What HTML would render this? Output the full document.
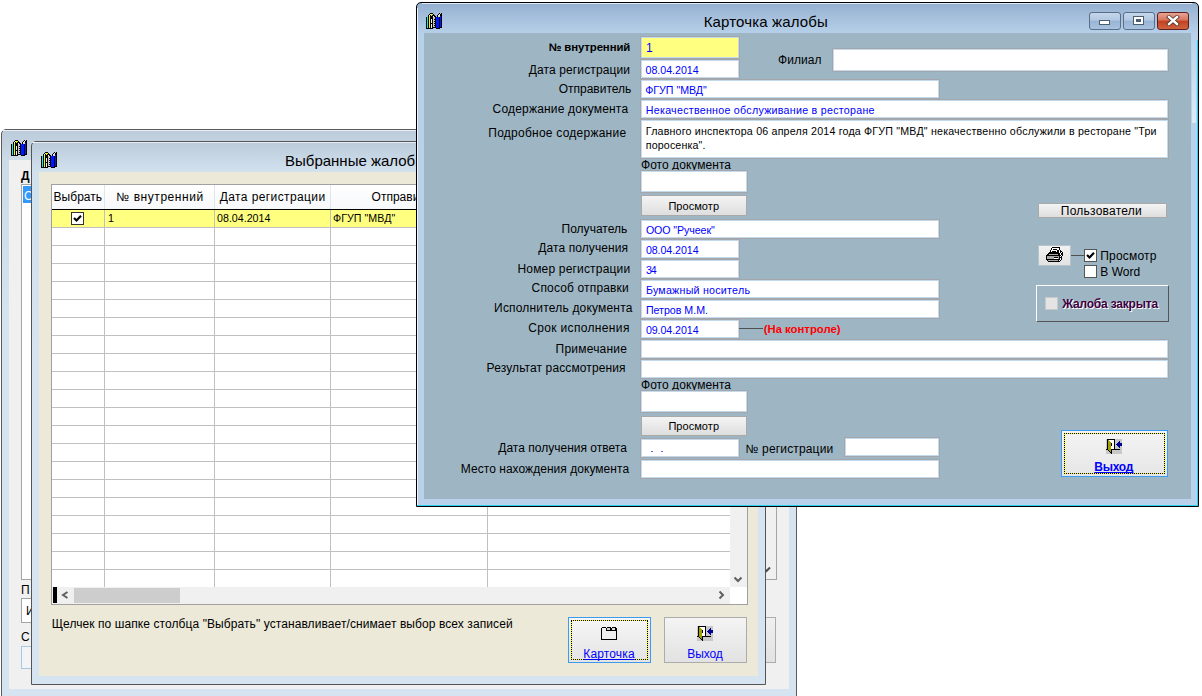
<!DOCTYPE html><html><head><meta charset="utf-8"><style>
html,body{margin:0;padding:0;}
body{width:1202px;height:696px;position:relative;overflow:hidden;background:#fff;font-family:"Liberation Sans",sans-serif;}
body div{position:absolute;box-sizing:border-box;}
.t{white-space:pre;}
</style></head><body>
<div style="left:1px;top:129px;width:796px;height:581px;border:1px solid #5a5a5a;border-radius:5px 5px 0 0;background:linear-gradient(#bccbda 0px,#cddbe8 30px,#d6e3f0 200px);"></div>
<div style="left:2px;top:130px;width:794px;height:1px;background:#e8eef4;"></div>
<svg style="position:absolute;left:11px;top:140px" width="16" height="16" shape-rendering="crispEdges"><rect x="4" y="0" width="3" height="1" fill="#000"/><rect x="13" y="0" width="1" height="1" fill="#000"/><rect x="15" y="0" width="1" height="1" fill="#000"/><rect x="3" y="1" width="1" height="1" fill="#000"/><rect x="4" y="1" width="1" height="1" fill="#f0f0f0"/><rect x="5" y="1" width="2" height="1" fill="#f8f000"/><rect x="7" y="1" width="1" height="1" fill="#000"/><rect x="12" y="1" width="1" height="1" fill="#000"/><rect x="13" y="1" width="1" height="1" fill="#f0f0f0"/><rect x="14" y="1" width="2" height="1" fill="#000"/><rect x="2" y="2" width="1" height="1" fill="#000"/><rect x="3" y="2" width="1" height="1" fill="#f0f0f0"/><rect x="4" y="2" width="1" height="1" fill="#000"/><rect x="5" y="2" width="1" height="1" fill="#f8f000"/><rect x="6" y="2" width="3" height="1" fill="#000"/><rect x="11" y="2" width="1" height="1" fill="#000"/><rect x="12" y="2" width="1" height="1" fill="#f0f0f0"/><rect x="13" y="2" width="1" height="1" fill="#e8dcc8"/><rect x="14" y="2" width="2" height="1" fill="#000"/><rect x="2" y="3" width="1" height="1" fill="#000"/><rect x="3" y="3" width="1" height="1" fill="#f8f000"/><rect x="4" y="3" width="3" height="1" fill="#000"/><rect x="7" y="3" width="1" height="1" fill="#f0f0f0"/><rect x="8" y="3" width="2" height="1" fill="#000"/><rect x="11" y="3" width="1" height="1" fill="#000"/><rect x="12" y="3" width="2" height="1" fill="#e8dcc8"/><rect x="14" y="3" width="1" height="1" fill="#0018ff"/><rect x="15" y="3" width="1" height="1" fill="#000"/><rect x="0" y="4" width="1" height="1" fill="#000"/><rect x="1" y="4" width="1" height="1" fill="#00f0f0"/><rect x="2" y="4" width="1" height="1" fill="#000"/><rect x="3" y="4" width="1" height="1" fill="#f8f000"/><rect x="4" y="4" width="3" height="1" fill="#000"/><rect x="7" y="4" width="2" height="1" fill="#c8c8c8"/><rect x="9" y="4" width="1" height="1" fill="#000"/><rect x="10" y="4" width="3" height="1" fill="#0018ff"/><rect x="13" y="4" width="1" height="1" fill="#000"/><rect x="14" y="4" width="1" height="1" fill="#0018ff"/><rect x="15" y="4" width="1" height="1" fill="#000"/><rect x="0" y="5" width="1" height="1" fill="#000"/><rect x="1" y="5" width="1" height="1" fill="#00f0f0"/><rect x="2" y="5" width="1" height="1" fill="#000"/><rect x="3" y="5" width="1" height="1" fill="#f8f000"/><rect x="4" y="5" width="3" height="1" fill="#000"/><rect x="7" y="5" width="2" height="1" fill="#c8c8c8"/><rect x="9" y="5" width="1" height="1" fill="#000"/><rect x="10" y="5" width="3" height="1" fill="#0018ff"/><rect x="13" y="5" width="1" height="1" fill="#000"/><rect x="14" y="5" width="1" height="1" fill="#0018ff"/><rect x="15" y="5" width="1" height="1" fill="#000"/><rect x="0" y="6" width="1" height="1" fill="#000"/><rect x="1" y="6" width="1" height="1" fill="#00f0f0"/><rect x="2" y="6" width="1" height="1" fill="#000"/><rect x="3" y="6" width="1" height="1" fill="#f8f000"/><rect x="4" y="6" width="1" height="1" fill="#000"/><rect x="5" y="6" width="1" height="1" fill="#f0f0f0"/><rect x="6" y="6" width="1" height="1" fill="#000"/><rect x="7" y="6" width="1" height="1" fill="#c8c8c8"/><rect x="8" y="6" width="2" height="1" fill="#000"/><rect x="10" y="6" width="3" height="1" fill="#0018ff"/><rect x="13" y="6" width="1" height="1" fill="#000"/><rect x="14" y="6" width="1" height="1" fill="#0018ff"/><rect x="15" y="6" width="1" height="1" fill="#000"/><rect x="0" y="7" width="1" height="1" fill="#000"/><rect x="1" y="7" width="1" height="1" fill="#00f0f0"/><rect x="2" y="7" width="1" height="1" fill="#000"/><rect x="3" y="7" width="1" height="1" fill="#f8f000"/><rect x="4" y="7" width="1" height="1" fill="#000"/><rect x="5" y="7" width="1" height="1" fill="#f0f0f0"/><rect x="6" y="7" width="1" height="1" fill="#000"/><rect x="7" y="7" width="2" height="1" fill="#c8c8c8"/><rect x="9" y="7" width="1" height="1" fill="#000"/><rect x="10" y="7" width="3" height="1" fill="#0018ff"/><rect x="13" y="7" width="1" height="1" fill="#000"/><rect x="14" y="7" width="1" height="1" fill="#0018ff"/><rect x="15" y="7" width="1" height="1" fill="#000"/><rect x="0" y="8" width="1" height="1" fill="#000"/><rect x="1" y="8" width="1" height="1" fill="#00f0f0"/><rect x="2" y="8" width="1" height="1" fill="#000"/><rect x="3" y="8" width="1" height="1" fill="#f8f000"/><rect x="4" y="8" width="1" height="1" fill="#000"/><rect x="5" y="8" width="1" height="1" fill="#f0f0f0"/><rect x="6" y="8" width="1" height="1" fill="#000"/><rect x="7" y="8" width="1" height="1" fill="#c8c8c8"/><rect x="8" y="8" width="2" height="1" fill="#000"/><rect x="10" y="8" width="3" height="1" fill="#0018ff"/><rect x="13" y="8" width="1" height="1" fill="#000"/><rect x="14" y="8" width="1" height="1" fill="#0018ff"/><rect x="15" y="8" width="1" height="1" fill="#000"/><rect x="0" y="9" width="1" height="1" fill="#000"/><rect x="1" y="9" width="1" height="1" fill="#00f0f0"/><rect x="2" y="9" width="1" height="1" fill="#000"/><rect x="3" y="9" width="1" height="1" fill="#f8f000"/><rect x="4" y="9" width="1" height="1" fill="#000"/><rect x="5" y="9" width="1" height="1" fill="#f0f0f0"/><rect x="6" y="9" width="1" height="1" fill="#000"/><rect x="7" y="9" width="2" height="1" fill="#c8c8c8"/><rect x="9" y="9" width="1" height="1" fill="#000"/><rect x="10" y="9" width="3" height="1" fill="#0018ff"/><rect x="13" y="9" width="1" height="1" fill="#000"/><rect x="14" y="9" width="1" height="1" fill="#0018ff"/><rect x="15" y="9" width="1" height="1" fill="#000"/><rect x="0" y="10" width="1" height="1" fill="#000"/><rect x="1" y="10" width="1" height="1" fill="#00f0f0"/><rect x="2" y="10" width="1" height="1" fill="#000"/><rect x="3" y="10" width="1" height="1" fill="#f8f000"/><rect x="4" y="10" width="3" height="1" fill="#000"/><rect x="7" y="10" width="1" height="1" fill="#c8c8c8"/><rect x="8" y="10" width="2" height="1" fill="#000"/><rect x="10" y="10" width="3" height="1" fill="#0018ff"/><rect x="13" y="10" width="1" height="1" fill="#000"/><rect x="14" y="10" width="1" height="1" fill="#0018ff"/><rect x="15" y="10" width="1" height="1" fill="#000"/><rect x="0" y="11" width="1" height="1" fill="#000"/><rect x="1" y="11" width="1" height="1" fill="#00f0f0"/><rect x="2" y="11" width="1" height="1" fill="#000"/><rect x="3" y="11" width="1" height="1" fill="#f8f000"/><rect x="4" y="11" width="1" height="1" fill="#000"/><rect x="5" y="11" width="1" height="1" fill="#f0f0f0"/><rect x="6" y="11" width="1" height="1" fill="#000"/><rect x="7" y="11" width="2" height="1" fill="#c8c8c8"/><rect x="9" y="11" width="1" height="1" fill="#000"/><rect x="10" y="11" width="3" height="1" fill="#0018ff"/><rect x="13" y="11" width="1" height="1" fill="#000"/><rect x="14" y="11" width="1" height="1" fill="#0018ff"/><rect x="15" y="11" width="1" height="1" fill="#000"/><rect x="0" y="12" width="1" height="1" fill="#000"/><rect x="1" y="12" width="1" height="1" fill="#00f0f0"/><rect x="2" y="12" width="1" height="1" fill="#000"/><rect x="3" y="12" width="1" height="1" fill="#f8f000"/><rect x="4" y="12" width="1" height="1" fill="#000"/><rect x="5" y="12" width="1" height="1" fill="#f0f0f0"/><rect x="6" y="12" width="1" height="1" fill="#000"/><rect x="7" y="12" width="1" height="1" fill="#c8c8c8"/><rect x="8" y="12" width="2" height="1" fill="#000"/><rect x="10" y="12" width="3" height="1" fill="#0018ff"/><rect x="13" y="12" width="1" height="1" fill="#000"/><rect x="14" y="12" width="1" height="1" fill="#0018ff"/><rect x="15" y="12" width="1" height="1" fill="#000"/><rect x="0" y="13" width="1" height="1" fill="#000"/><rect x="1" y="13" width="1" height="1" fill="#00f0f0"/><rect x="2" y="13" width="1" height="1" fill="#000"/><rect x="3" y="13" width="1" height="1" fill="#f8f000"/><rect x="4" y="13" width="1" height="1" fill="#000"/><rect x="5" y="13" width="1" height="1" fill="#f0f0f0"/><rect x="6" y="13" width="1" height="1" fill="#000"/><rect x="7" y="13" width="2" height="1" fill="#c8c8c8"/><rect x="9" y="13" width="1" height="1" fill="#000"/><rect x="10" y="13" width="3" height="1" fill="#0018ff"/><rect x="13" y="13" width="1" height="1" fill="#000"/><rect x="14" y="13" width="1" height="1" fill="#0018ff"/><rect x="15" y="13" width="1" height="1" fill="#000"/><rect x="0" y="14" width="1" height="1" fill="#000"/><rect x="1" y="14" width="1" height="1" fill="#00f0f0"/><rect x="2" y="14" width="1" height="1" fill="#000"/><rect x="3" y="14" width="1" height="1" fill="#f8f000"/><rect x="4" y="14" width="1" height="1" fill="#000"/><rect x="5" y="14" width="1" height="1" fill="#f0f0f0"/><rect x="6" y="14" width="4" height="1" fill="#000"/><rect x="10" y="14" width="3" height="1" fill="#0018ff"/><rect x="13" y="14" width="3" height="1" fill="#000"/><rect x="0" y="15" width="7" height="1" fill="#000"/><rect x="10" y="15" width="4" height="1" fill="#000"/></svg>
<div style="left:9px;top:160px;width:780px;height:529px;background:#f0f0f0;"></div>
<div class="t" style="left:21px;top:169px;font-size:12px;line-height:14px;color:#000;font-weight:bold;">Д</div>
<div style="left:21px;top:184px;width:756px;height:396px;border:1px solid #a5a5a5;background:#fff;"></div>
<div style="left:759px;top:185px;width:17px;height:394px;background:#f0f0f0;"></div>
<div style="left:23px;top:186px;width:17px;height:17px;background:#3399ff;"></div>
<div class="t" style="left:24px;top:189px;font-size:12px;line-height:14px;color:#fff;">С</div>
<div class="t" style="left:21px;top:583px;font-size:12px;line-height:14px;color:#000;">П</div>
<div style="left:21px;top:598px;width:19px;height:25px;border:1px solid #a5a5a5;background:#fff;"></div>
<div class="t" style="left:26px;top:604px;font-size:12px;line-height:14px;color:#000;">И</div>
<div class="t" style="left:21px;top:630px;font-size:12px;line-height:14px;color:#000;">С</div>
<div style="left:21px;top:646px;width:19px;height:23px;border:1px solid #aac8e6;background:#f2f4f6;"></div>
<svg style="position:absolute;left:762px;top:566px" width="10" height="8"><path d="M1 1.5 L4.5 5 L8 1.5" stroke="#505050" stroke-width="2" fill="none"/></svg>
<div style="left:760px;top:617px;width:16px;height:46px;border:1px solid #acacac;background:linear-gradient(#f0f0f0,#e2e2e2);"></div>
<div style="left:31px;top:141px;width:735px;height:544px;border:1px solid #555;border-radius:5px 5px 0 0;background:linear-gradient(#bccbda 0px,#d2e1ee 30px,#d6e3f0 200px);"></div>
<div style="left:32px;top:142px;width:733px;height:1px;background:#e8eef4;"></div>
<svg style="position:absolute;left:41px;top:152px" width="16" height="16" shape-rendering="crispEdges"><rect x="4" y="0" width="3" height="1" fill="#000"/><rect x="13" y="0" width="1" height="1" fill="#000"/><rect x="15" y="0" width="1" height="1" fill="#000"/><rect x="3" y="1" width="1" height="1" fill="#000"/><rect x="4" y="1" width="1" height="1" fill="#f0f0f0"/><rect x="5" y="1" width="2" height="1" fill="#f8f000"/><rect x="7" y="1" width="1" height="1" fill="#000"/><rect x="12" y="1" width="1" height="1" fill="#000"/><rect x="13" y="1" width="1" height="1" fill="#f0f0f0"/><rect x="14" y="1" width="2" height="1" fill="#000"/><rect x="2" y="2" width="1" height="1" fill="#000"/><rect x="3" y="2" width="1" height="1" fill="#f0f0f0"/><rect x="4" y="2" width="1" height="1" fill="#000"/><rect x="5" y="2" width="1" height="1" fill="#f8f000"/><rect x="6" y="2" width="3" height="1" fill="#000"/><rect x="11" y="2" width="1" height="1" fill="#000"/><rect x="12" y="2" width="1" height="1" fill="#f0f0f0"/><rect x="13" y="2" width="1" height="1" fill="#e8dcc8"/><rect x="14" y="2" width="2" height="1" fill="#000"/><rect x="2" y="3" width="1" height="1" fill="#000"/><rect x="3" y="3" width="1" height="1" fill="#f8f000"/><rect x="4" y="3" width="3" height="1" fill="#000"/><rect x="7" y="3" width="1" height="1" fill="#f0f0f0"/><rect x="8" y="3" width="2" height="1" fill="#000"/><rect x="11" y="3" width="1" height="1" fill="#000"/><rect x="12" y="3" width="2" height="1" fill="#e8dcc8"/><rect x="14" y="3" width="1" height="1" fill="#0018ff"/><rect x="15" y="3" width="1" height="1" fill="#000"/><rect x="0" y="4" width="1" height="1" fill="#000"/><rect x="1" y="4" width="1" height="1" fill="#00f0f0"/><rect x="2" y="4" width="1" height="1" fill="#000"/><rect x="3" y="4" width="1" height="1" fill="#f8f000"/><rect x="4" y="4" width="3" height="1" fill="#000"/><rect x="7" y="4" width="2" height="1" fill="#c8c8c8"/><rect x="9" y="4" width="1" height="1" fill="#000"/><rect x="10" y="4" width="3" height="1" fill="#0018ff"/><rect x="13" y="4" width="1" height="1" fill="#000"/><rect x="14" y="4" width="1" height="1" fill="#0018ff"/><rect x="15" y="4" width="1" height="1" fill="#000"/><rect x="0" y="5" width="1" height="1" fill="#000"/><rect x="1" y="5" width="1" height="1" fill="#00f0f0"/><rect x="2" y="5" width="1" height="1" fill="#000"/><rect x="3" y="5" width="1" height="1" fill="#f8f000"/><rect x="4" y="5" width="3" height="1" fill="#000"/><rect x="7" y="5" width="2" height="1" fill="#c8c8c8"/><rect x="9" y="5" width="1" height="1" fill="#000"/><rect x="10" y="5" width="3" height="1" fill="#0018ff"/><rect x="13" y="5" width="1" height="1" fill="#000"/><rect x="14" y="5" width="1" height="1" fill="#0018ff"/><rect x="15" y="5" width="1" height="1" fill="#000"/><rect x="0" y="6" width="1" height="1" fill="#000"/><rect x="1" y="6" width="1" height="1" fill="#00f0f0"/><rect x="2" y="6" width="1" height="1" fill="#000"/><rect x="3" y="6" width="1" height="1" fill="#f8f000"/><rect x="4" y="6" width="1" height="1" fill="#000"/><rect x="5" y="6" width="1" height="1" fill="#f0f0f0"/><rect x="6" y="6" width="1" height="1" fill="#000"/><rect x="7" y="6" width="1" height="1" fill="#c8c8c8"/><rect x="8" y="6" width="2" height="1" fill="#000"/><rect x="10" y="6" width="3" height="1" fill="#0018ff"/><rect x="13" y="6" width="1" height="1" fill="#000"/><rect x="14" y="6" width="1" height="1" fill="#0018ff"/><rect x="15" y="6" width="1" height="1" fill="#000"/><rect x="0" y="7" width="1" height="1" fill="#000"/><rect x="1" y="7" width="1" height="1" fill="#00f0f0"/><rect x="2" y="7" width="1" height="1" fill="#000"/><rect x="3" y="7" width="1" height="1" fill="#f8f000"/><rect x="4" y="7" width="1" height="1" fill="#000"/><rect x="5" y="7" width="1" height="1" fill="#f0f0f0"/><rect x="6" y="7" width="1" height="1" fill="#000"/><rect x="7" y="7" width="2" height="1" fill="#c8c8c8"/><rect x="9" y="7" width="1" height="1" fill="#000"/><rect x="10" y="7" width="3" height="1" fill="#0018ff"/><rect x="13" y="7" width="1" height="1" fill="#000"/><rect x="14" y="7" width="1" height="1" fill="#0018ff"/><rect x="15" y="7" width="1" height="1" fill="#000"/><rect x="0" y="8" width="1" height="1" fill="#000"/><rect x="1" y="8" width="1" height="1" fill="#00f0f0"/><rect x="2" y="8" width="1" height="1" fill="#000"/><rect x="3" y="8" width="1" height="1" fill="#f8f000"/><rect x="4" y="8" width="1" height="1" fill="#000"/><rect x="5" y="8" width="1" height="1" fill="#f0f0f0"/><rect x="6" y="8" width="1" height="1" fill="#000"/><rect x="7" y="8" width="1" height="1" fill="#c8c8c8"/><rect x="8" y="8" width="2" height="1" fill="#000"/><rect x="10" y="8" width="3" height="1" fill="#0018ff"/><rect x="13" y="8" width="1" height="1" fill="#000"/><rect x="14" y="8" width="1" height="1" fill="#0018ff"/><rect x="15" y="8" width="1" height="1" fill="#000"/><rect x="0" y="9" width="1" height="1" fill="#000"/><rect x="1" y="9" width="1" height="1" fill="#00f0f0"/><rect x="2" y="9" width="1" height="1" fill="#000"/><rect x="3" y="9" width="1" height="1" fill="#f8f000"/><rect x="4" y="9" width="1" height="1" fill="#000"/><rect x="5" y="9" width="1" height="1" fill="#f0f0f0"/><rect x="6" y="9" width="1" height="1" fill="#000"/><rect x="7" y="9" width="2" height="1" fill="#c8c8c8"/><rect x="9" y="9" width="1" height="1" fill="#000"/><rect x="10" y="9" width="3" height="1" fill="#0018ff"/><rect x="13" y="9" width="1" height="1" fill="#000"/><rect x="14" y="9" width="1" height="1" fill="#0018ff"/><rect x="15" y="9" width="1" height="1" fill="#000"/><rect x="0" y="10" width="1" height="1" fill="#000"/><rect x="1" y="10" width="1" height="1" fill="#00f0f0"/><rect x="2" y="10" width="1" height="1" fill="#000"/><rect x="3" y="10" width="1" height="1" fill="#f8f000"/><rect x="4" y="10" width="3" height="1" fill="#000"/><rect x="7" y="10" width="1" height="1" fill="#c8c8c8"/><rect x="8" y="10" width="2" height="1" fill="#000"/><rect x="10" y="10" width="3" height="1" fill="#0018ff"/><rect x="13" y="10" width="1" height="1" fill="#000"/><rect x="14" y="10" width="1" height="1" fill="#0018ff"/><rect x="15" y="10" width="1" height="1" fill="#000"/><rect x="0" y="11" width="1" height="1" fill="#000"/><rect x="1" y="11" width="1" height="1" fill="#00f0f0"/><rect x="2" y="11" width="1" height="1" fill="#000"/><rect x="3" y="11" width="1" height="1" fill="#f8f000"/><rect x="4" y="11" width="1" height="1" fill="#000"/><rect x="5" y="11" width="1" height="1" fill="#f0f0f0"/><rect x="6" y="11" width="1" height="1" fill="#000"/><rect x="7" y="11" width="2" height="1" fill="#c8c8c8"/><rect x="9" y="11" width="1" height="1" fill="#000"/><rect x="10" y="11" width="3" height="1" fill="#0018ff"/><rect x="13" y="11" width="1" height="1" fill="#000"/><rect x="14" y="11" width="1" height="1" fill="#0018ff"/><rect x="15" y="11" width="1" height="1" fill="#000"/><rect x="0" y="12" width="1" height="1" fill="#000"/><rect x="1" y="12" width="1" height="1" fill="#00f0f0"/><rect x="2" y="12" width="1" height="1" fill="#000"/><rect x="3" y="12" width="1" height="1" fill="#f8f000"/><rect x="4" y="12" width="1" height="1" fill="#000"/><rect x="5" y="12" width="1" height="1" fill="#f0f0f0"/><rect x="6" y="12" width="1" height="1" fill="#000"/><rect x="7" y="12" width="1" height="1" fill="#c8c8c8"/><rect x="8" y="12" width="2" height="1" fill="#000"/><rect x="10" y="12" width="3" height="1" fill="#0018ff"/><rect x="13" y="12" width="1" height="1" fill="#000"/><rect x="14" y="12" width="1" height="1" fill="#0018ff"/><rect x="15" y="12" width="1" height="1" fill="#000"/><rect x="0" y="13" width="1" height="1" fill="#000"/><rect x="1" y="13" width="1" height="1" fill="#00f0f0"/><rect x="2" y="13" width="1" height="1" fill="#000"/><rect x="3" y="13" width="1" height="1" fill="#f8f000"/><rect x="4" y="13" width="1" height="1" fill="#000"/><rect x="5" y="13" width="1" height="1" fill="#f0f0f0"/><rect x="6" y="13" width="1" height="1" fill="#000"/><rect x="7" y="13" width="2" height="1" fill="#c8c8c8"/><rect x="9" y="13" width="1" height="1" fill="#000"/><rect x="10" y="13" width="3" height="1" fill="#0018ff"/><rect x="13" y="13" width="1" height="1" fill="#000"/><rect x="14" y="13" width="1" height="1" fill="#0018ff"/><rect x="15" y="13" width="1" height="1" fill="#000"/><rect x="0" y="14" width="1" height="1" fill="#000"/><rect x="1" y="14" width="1" height="1" fill="#00f0f0"/><rect x="2" y="14" width="1" height="1" fill="#000"/><rect x="3" y="14" width="1" height="1" fill="#f8f000"/><rect x="4" y="14" width="1" height="1" fill="#000"/><rect x="5" y="14" width="1" height="1" fill="#f0f0f0"/><rect x="6" y="14" width="4" height="1" fill="#000"/><rect x="10" y="14" width="3" height="1" fill="#0018ff"/><rect x="13" y="14" width="3" height="1" fill="#000"/><rect x="0" y="15" width="7" height="1" fill="#000"/><rect x="10" y="15" width="4" height="1" fill="#000"/></svg>
<div class="t" style="left:285.00px;top:152px;font-size:15px;line-height:18px;letter-spacing:0.000px;color:#000;">Выбранные жалобы</div>
<div style="left:39px;top:172px;width:719px;height:504px;background:#ece9d8;"></div>
<div style="left:51px;top:184px;width:697px;height:421px;border:1px solid #a0a0a0;background:#fff;"></div>
<div style="left:52px;top:185px;width:678px;height:24px;background:linear-gradient(#ffffff,#f7f8fa);"></div>
<div style="left:52px;top:209px;width:678px;height:1px;background:#000;"></div>
<div style="left:104px;top:185px;width:1px;height:24px;background:#dde6f0;"></div>
<div style="left:214px;top:185px;width:1px;height:24px;background:#dde6f0;"></div>
<div style="left:330px;top:185px;width:1px;height:24px;background:#dde6f0;"></div>
<div style="left:487px;top:185px;width:1px;height:24px;background:#dde6f0;"></div>
<div style="left:52px;top:210px;width:678px;height:17px;background:#ffff80;"></div>
<div style="left:52px;top:227px;width:678px;height:1px;background:#c0c0c0;"></div>
<div style="left:52px;top:245px;width:678px;height:1px;background:#c0c0c0;"></div>
<div style="left:52px;top:263px;width:678px;height:1px;background:#c0c0c0;"></div>
<div style="left:52px;top:281px;width:678px;height:1px;background:#c0c0c0;"></div>
<div style="left:52px;top:299px;width:678px;height:1px;background:#c0c0c0;"></div>
<div style="left:52px;top:317px;width:678px;height:1px;background:#c0c0c0;"></div>
<div style="left:52px;top:335px;width:678px;height:1px;background:#c0c0c0;"></div>
<div style="left:52px;top:353px;width:678px;height:1px;background:#c0c0c0;"></div>
<div style="left:52px;top:371px;width:678px;height:1px;background:#c0c0c0;"></div>
<div style="left:52px;top:389px;width:678px;height:1px;background:#c0c0c0;"></div>
<div style="left:52px;top:407px;width:678px;height:1px;background:#c0c0c0;"></div>
<div style="left:52px;top:425px;width:678px;height:1px;background:#c0c0c0;"></div>
<div style="left:52px;top:443px;width:678px;height:1px;background:#c0c0c0;"></div>
<div style="left:52px;top:461px;width:678px;height:1px;background:#c0c0c0;"></div>
<div style="left:52px;top:479px;width:678px;height:1px;background:#c0c0c0;"></div>
<div style="left:52px;top:497px;width:678px;height:1px;background:#c0c0c0;"></div>
<div style="left:52px;top:515px;width:678px;height:1px;background:#c0c0c0;"></div>
<div style="left:52px;top:533px;width:678px;height:1px;background:#c0c0c0;"></div>
<div style="left:52px;top:551px;width:678px;height:1px;background:#c0c0c0;"></div>
<div style="left:52px;top:569px;width:678px;height:1px;background:#c0c0c0;"></div>
<div style="left:104px;top:210px;width:1px;height:377px;background:#c0c0c0;"></div>
<div style="left:214px;top:210px;width:1px;height:377px;background:#c0c0c0;"></div>
<div style="left:330px;top:210px;width:1px;height:377px;background:#c0c0c0;"></div>
<div style="left:487px;top:210px;width:1px;height:377px;background:#c0c0c0;"></div>
<div class="t" style="left:53.60px;top:190px;font-size:12px;line-height:14px;letter-spacing:0.020px;color:#000;">Выбрать</div>
<div class="t" style="left:116.30px;top:190px;font-size:12px;line-height:14px;letter-spacing:0.563px;color:#000;">№ внутренний</div>
<div class="t" style="left:219.80px;top:190px;font-size:12px;line-height:14px;letter-spacing:0.390px;color:#000;">Дата регистрации</div>
<div class="t" style="left:371.60px;top:190px;font-size:12px;line-height:14px;letter-spacing:0.001px;color:#000;">Отправитель</div>
<svg style="position:absolute;left:71px;top:212px" width="13" height="13"><rect x="0.5" y="0.5" width="12" height="12" fill="#fff" stroke="#333"/><path d="M3 6 L5.5 8.5 L10 3.8" stroke="#000" stroke-width="2.2" fill="none"/></svg>
<div class="t" style="left:108.00px;top:212px;font-size:10.67px;line-height:13px;letter-spacing:0.000px;color:#000;">1</div>
<div class="t" style="left:217.10px;top:212px;font-size:10.67px;line-height:13px;letter-spacing:-0.012px;color:#000;">08.04.2014</div>
<div class="t" style="left:333.00px;top:212px;font-size:10.67px;line-height:13px;letter-spacing:0.054px;color:#000;">ФГУП "МВД"</div>
<div style="left:730px;top:185px;width:17px;height:402px;background:#f0f0f0;"></div>
<svg style="position:absolute;left:733px;top:575px" width="10" height="10"><path d="M1.5 2.5 L5 6 L8.5 2.5" stroke="#606060" stroke-width="2" fill="none"/></svg>
<div style="left:52px;top:587px;width:678px;height:17px;background:#f0f0f0;"></div>
<div style="left:53px;top:587px;width:4px;height:16px;background:#000;"></div>
<svg style="position:absolute;left:60px;top:590px" width="10" height="10"><path d="M7.5 2 L3 5 L7.5 8" stroke="#606060" stroke-width="2" fill="none"/></svg>
<div style="left:74px;top:588px;width:106px;height:15px;background:#cdcdcd;"></div>
<svg style="position:absolute;left:716px;top:590px" width="10" height="10"><path d="M3.5 1.5 L7 5 L3.5 8.5" stroke="#606060" stroke-width="2" fill="none"/></svg>
<div style="left:730px;top:587px;width:17px;height:17px;background:#fff;"></div>
<div class="t" style="left:51.70px;top:617px;font-size:12px;line-height:14px;letter-spacing:0.083px;color:#000;">Щелчек по шапке столбца "Выбрать" устанавливает/снимает выбор всех записей</div>
<div style="left:568px;top:617px;width:83px;height:46px;border:1px solid #3c9bef;background:linear-gradient(#f6f6f6,#e4e4e4);"></div>
<div style="left:571px;top:620px;width:77px;height:40px;border:1px solid #ffff00;"></div>
<div style="left:571px;top:620px;width:77px;height:40px;border:1px dotted #000;"></div>
<svg style="position:absolute;left:601px;top:627px" width="16" height="13" shape-rendering="crispEdges"><rect x="1" y="0" width="4" height="1" fill="#000"/><rect x="6" y="0" width="4" height="1" fill="#000"/><rect x="11" y="0" width="4" height="1" fill="#000"/><rect x="0" y="1" width="1" height="1" fill="#000"/><rect x="5" y="1" width="1" height="1" fill="#000"/><rect x="6" y="1" width="3" height="1" fill="#d8d8d8"/><rect x="9" y="1" width="2" height="1" fill="#000"/><rect x="11" y="1" width="3" height="1" fill="#d8d8d8"/><rect x="14" y="1" width="2" height="1" fill="#000"/><rect x="0" y="2" width="1" height="1" fill="#000"/><rect x="1" y="2" width="4" height="1" fill="#f0f0f0"/><rect x="5" y="2" width="1" height="1" fill="#000"/><rect x="6" y="2" width="3" height="1" fill="#d8d8d8"/><rect x="9" y="2" width="2" height="1" fill="#000"/><rect x="11" y="2" width="3" height="1" fill="#d8d8d8"/><rect x="14" y="2" width="2" height="1" fill="#000"/><rect x="0" y="3" width="1" height="1" fill="#000"/><rect x="1" y="3" width="4" height="1" fill="#f0f0f0"/><rect x="5" y="3" width="11" height="1" fill="#000"/><rect x="0" y="4" width="1" height="1" fill="#000"/><rect x="1" y="4" width="14" height="1" fill="#f0f0f0"/><rect x="15" y="4" width="1" height="1" fill="#000"/><rect x="0" y="5" width="1" height="1" fill="#000"/><rect x="1" y="5" width="14" height="1" fill="#f0f0f0"/><rect x="15" y="5" width="1" height="1" fill="#000"/><rect x="0" y="6" width="1" height="1" fill="#000"/><rect x="1" y="6" width="14" height="1" fill="#f0f0f0"/><rect x="15" y="6" width="1" height="1" fill="#000"/><rect x="0" y="7" width="1" height="1" fill="#000"/><rect x="1" y="7" width="14" height="1" fill="#f0f0f0"/><rect x="15" y="7" width="1" height="1" fill="#000"/><rect x="0" y="8" width="1" height="1" fill="#000"/><rect x="1" y="8" width="14" height="1" fill="#f0f0f0"/><rect x="15" y="8" width="1" height="1" fill="#000"/><rect x="0" y="9" width="1" height="1" fill="#000"/><rect x="1" y="9" width="14" height="1" fill="#f0f0f0"/><rect x="15" y="9" width="1" height="1" fill="#000"/><rect x="0" y="10" width="1" height="1" fill="#000"/><rect x="1" y="10" width="14" height="1" fill="#f0f0f0"/><rect x="15" y="10" width="1" height="1" fill="#000"/><rect x="0" y="11" width="1" height="1" fill="#000"/><rect x="1" y="11" width="14" height="1" fill="#f0f0f0"/><rect x="15" y="11" width="1" height="1" fill="#000"/><rect x="0" y="12" width="16" height="1" fill="#000"/></svg>
<div class="t" style="left:583.30px;top:647px;font-size:12px;line-height:14px;letter-spacing:0.141px;color:#0000ff;text-underline-offset:1px;text-decoration-skip-ink:none;"><u>Карточка</u></div>
<div style="left:664px;top:617px;width:83px;height:46px;border:1px solid #acacac;background:linear-gradient(#f4f4f4,#e2e2e2);"></div>
<svg style="position:absolute;left:697px;top:626px" width="16" height="15" shape-rendering="crispEdges"><rect x="0" y="0" width="1" height="1" fill="#c8c8c8"/><rect x="1" y="0" width="8" height="1" fill="#000"/><rect x="9" y="0" width="7" height="1" fill="#c8c8c8"/><rect x="0" y="1" width="1" height="1" fill="#c8c8c8"/><rect x="1" y="1" width="1" height="1" fill="#000"/><rect x="2" y="1" width="1" height="1" fill="#a0a000"/><rect x="3" y="1" width="5" height="1" fill="#fff"/><rect x="8" y="1" width="1" height="1" fill="#000"/><rect x="9" y="1" width="7" height="1" fill="#c8c8c8"/><rect x="0" y="2" width="1" height="1" fill="#c8c8c8"/><rect x="1" y="2" width="1" height="1" fill="#000"/><rect x="2" y="2" width="2" height="1" fill="#a0a000"/><rect x="4" y="2" width="4" height="1" fill="#fff"/><rect x="8" y="2" width="1" height="1" fill="#000"/><rect x="9" y="2" width="4" height="1" fill="#c8c8c8"/><rect x="13" y="2" width="1" height="1" fill="#000090"/><rect x="14" y="2" width="2" height="1" fill="#c8c8c8"/><rect x="0" y="3" width="1" height="1" fill="#c8c8c8"/><rect x="1" y="3" width="1" height="1" fill="#000"/><rect x="2" y="3" width="3" height="1" fill="#a0a000"/><rect x="5" y="3" width="3" height="1" fill="#fff"/><rect x="8" y="3" width="1" height="1" fill="#000"/><rect x="9" y="3" width="3" height="1" fill="#c8c8c8"/><rect x="12" y="3" width="2" height="1" fill="#000090"/><rect x="14" y="3" width="2" height="1" fill="#c8c8c8"/><rect x="0" y="4" width="1" height="1" fill="#c8c8c8"/><rect x="1" y="4" width="1" height="1" fill="#000"/><rect x="2" y="4" width="3" height="1" fill="#a0a000"/><rect x="5" y="4" width="1" height="1" fill="#000"/><rect x="6" y="4" width="2" height="1" fill="#fff"/><rect x="8" y="4" width="1" height="1" fill="#000"/><rect x="9" y="4" width="2" height="1" fill="#c8c8c8"/><rect x="11" y="4" width="5" height="1" fill="#000090"/><rect x="0" y="5" width="1" height="1" fill="#c8c8c8"/><rect x="1" y="5" width="1" height="1" fill="#000"/><rect x="2" y="5" width="3" height="1" fill="#a0a000"/><rect x="5" y="5" width="1" height="1" fill="#000"/><rect x="6" y="5" width="2" height="1" fill="#fff"/><rect x="8" y="5" width="1" height="1" fill="#000"/><rect x="9" y="5" width="1" height="1" fill="#c8c8c8"/><rect x="10" y="5" width="6" height="1" fill="#000090"/><rect x="0" y="6" width="1" height="1" fill="#c8c8c8"/><rect x="1" y="6" width="1" height="1" fill="#000"/><rect x="2" y="6" width="3" height="1" fill="#a0a000"/><rect x="5" y="6" width="1" height="1" fill="#000"/><rect x="6" y="6" width="2" height="1" fill="#fff"/><rect x="8" y="6" width="1" height="1" fill="#000"/><rect x="9" y="6" width="2" height="1" fill="#c8c8c8"/><rect x="11" y="6" width="5" height="1" fill="#000090"/><rect x="0" y="7" width="1" height="1" fill="#c8c8c8"/><rect x="1" y="7" width="1" height="1" fill="#000"/><rect x="2" y="7" width="3" height="1" fill="#a0a000"/><rect x="5" y="7" width="3" height="1" fill="#fff"/><rect x="8" y="7" width="1" height="1" fill="#000"/><rect x="9" y="7" width="3" height="1" fill="#c8c8c8"/><rect x="12" y="7" width="2" height="1" fill="#000090"/><rect x="14" y="7" width="2" height="1" fill="#c8c8c8"/><rect x="0" y="8" width="1" height="1" fill="#c8c8c8"/><rect x="1" y="8" width="1" height="1" fill="#000"/><rect x="2" y="8" width="3" height="1" fill="#a0a000"/><rect x="5" y="8" width="3" height="1" fill="#fff"/><rect x="8" y="8" width="1" height="1" fill="#000"/><rect x="9" y="8" width="4" height="1" fill="#c8c8c8"/><rect x="13" y="8" width="1" height="1" fill="#000090"/><rect x="14" y="8" width="2" height="1" fill="#c8c8c8"/><rect x="0" y="9" width="1" height="1" fill="#c8c8c8"/><rect x="1" y="9" width="1" height="1" fill="#000"/><rect x="2" y="9" width="3" height="1" fill="#a0a000"/><rect x="5" y="9" width="3" height="1" fill="#fff"/><rect x="8" y="9" width="1" height="1" fill="#000"/><rect x="9" y="9" width="7" height="1" fill="#c8c8c8"/><rect x="0" y="10" width="2" height="1" fill="#000"/><rect x="2" y="10" width="3" height="1" fill="#a0a000"/><rect x="5" y="10" width="9" height="1" fill="#000"/><rect x="14" y="10" width="2" height="1" fill="#c8c8c8"/><rect x="0" y="11" width="2" height="1" fill="#c8c8c8"/><rect x="2" y="11" width="1" height="1" fill="#000"/><rect x="3" y="11" width="2" height="1" fill="#a0a000"/><rect x="5" y="11" width="1" height="1" fill="#000"/><rect x="6" y="11" width="10" height="1" fill="#c8c8c8"/><rect x="0" y="12" width="3" height="1" fill="#c8c8c8"/><rect x="3" y="12" width="1" height="1" fill="#000"/><rect x="4" y="12" width="1" height="1" fill="#a0a000"/><rect x="5" y="12" width="1" height="1" fill="#000"/><rect x="6" y="12" width="10" height="1" fill="#c8c8c8"/><rect x="0" y="13" width="4" height="1" fill="#c8c8c8"/><rect x="4" y="13" width="2" height="1" fill="#000"/><rect x="6" y="13" width="10" height="1" fill="#c8c8c8"/><rect x="0" y="14" width="5" height="1" fill="#c8c8c8"/><rect x="5" y="14" width="1" height="1" fill="#000"/><rect x="6" y="14" width="10" height="1" fill="#c8c8c8"/></svg>
<div class="t" style="left:687.30px;top:647px;font-size:12px;line-height:14px;letter-spacing:-0.126px;color:#0000ff;">Выход</div>
<div style="left:416px;top:2px;width:783px;height:505px;border:1px solid #000;border-radius:5px 5px 0 0;background:linear-gradient(#95b0d0 0px,#b8d1ea 31px,#b9d1ea 200px);"></div>
<div style="left:1197px;top:40px;width:1px;height:466px;background:#2cd0f0;"></div>
<div style="left:417px;top:8px;width:1px;height:497px;background:#eef4fa;"></div>
<div style="left:422px;top:3px;width:770px;height:1px;background:#dfe9f5;"></div>
<div style="left:417px;top:505px;width:781px;height:1px;background:#2cd0f0;"></div>
<svg style="position:absolute;left:426px;top:13px" width="16" height="16" shape-rendering="crispEdges"><rect x="4" y="0" width="3" height="1" fill="#000"/><rect x="13" y="0" width="1" height="1" fill="#000"/><rect x="15" y="0" width="1" height="1" fill="#000"/><rect x="3" y="1" width="1" height="1" fill="#000"/><rect x="4" y="1" width="1" height="1" fill="#f0f0f0"/><rect x="5" y="1" width="2" height="1" fill="#f8f000"/><rect x="7" y="1" width="1" height="1" fill="#000"/><rect x="12" y="1" width="1" height="1" fill="#000"/><rect x="13" y="1" width="1" height="1" fill="#f0f0f0"/><rect x="14" y="1" width="2" height="1" fill="#000"/><rect x="2" y="2" width="1" height="1" fill="#000"/><rect x="3" y="2" width="1" height="1" fill="#f0f0f0"/><rect x="4" y="2" width="1" height="1" fill="#000"/><rect x="5" y="2" width="1" height="1" fill="#f8f000"/><rect x="6" y="2" width="3" height="1" fill="#000"/><rect x="11" y="2" width="1" height="1" fill="#000"/><rect x="12" y="2" width="1" height="1" fill="#f0f0f0"/><rect x="13" y="2" width="1" height="1" fill="#e8dcc8"/><rect x="14" y="2" width="2" height="1" fill="#000"/><rect x="2" y="3" width="1" height="1" fill="#000"/><rect x="3" y="3" width="1" height="1" fill="#f8f000"/><rect x="4" y="3" width="3" height="1" fill="#000"/><rect x="7" y="3" width="1" height="1" fill="#f0f0f0"/><rect x="8" y="3" width="2" height="1" fill="#000"/><rect x="11" y="3" width="1" height="1" fill="#000"/><rect x="12" y="3" width="2" height="1" fill="#e8dcc8"/><rect x="14" y="3" width="1" height="1" fill="#0018ff"/><rect x="15" y="3" width="1" height="1" fill="#000"/><rect x="0" y="4" width="1" height="1" fill="#000"/><rect x="1" y="4" width="1" height="1" fill="#00f0f0"/><rect x="2" y="4" width="1" height="1" fill="#000"/><rect x="3" y="4" width="1" height="1" fill="#f8f000"/><rect x="4" y="4" width="3" height="1" fill="#000"/><rect x="7" y="4" width="2" height="1" fill="#c8c8c8"/><rect x="9" y="4" width="1" height="1" fill="#000"/><rect x="10" y="4" width="3" height="1" fill="#0018ff"/><rect x="13" y="4" width="1" height="1" fill="#000"/><rect x="14" y="4" width="1" height="1" fill="#0018ff"/><rect x="15" y="4" width="1" height="1" fill="#000"/><rect x="0" y="5" width="1" height="1" fill="#000"/><rect x="1" y="5" width="1" height="1" fill="#00f0f0"/><rect x="2" y="5" width="1" height="1" fill="#000"/><rect x="3" y="5" width="1" height="1" fill="#f8f000"/><rect x="4" y="5" width="3" height="1" fill="#000"/><rect x="7" y="5" width="2" height="1" fill="#c8c8c8"/><rect x="9" y="5" width="1" height="1" fill="#000"/><rect x="10" y="5" width="3" height="1" fill="#0018ff"/><rect x="13" y="5" width="1" height="1" fill="#000"/><rect x="14" y="5" width="1" height="1" fill="#0018ff"/><rect x="15" y="5" width="1" height="1" fill="#000"/><rect x="0" y="6" width="1" height="1" fill="#000"/><rect x="1" y="6" width="1" height="1" fill="#00f0f0"/><rect x="2" y="6" width="1" height="1" fill="#000"/><rect x="3" y="6" width="1" height="1" fill="#f8f000"/><rect x="4" y="6" width="1" height="1" fill="#000"/><rect x="5" y="6" width="1" height="1" fill="#f0f0f0"/><rect x="6" y="6" width="1" height="1" fill="#000"/><rect x="7" y="6" width="1" height="1" fill="#c8c8c8"/><rect x="8" y="6" width="2" height="1" fill="#000"/><rect x="10" y="6" width="3" height="1" fill="#0018ff"/><rect x="13" y="6" width="1" height="1" fill="#000"/><rect x="14" y="6" width="1" height="1" fill="#0018ff"/><rect x="15" y="6" width="1" height="1" fill="#000"/><rect x="0" y="7" width="1" height="1" fill="#000"/><rect x="1" y="7" width="1" height="1" fill="#00f0f0"/><rect x="2" y="7" width="1" height="1" fill="#000"/><rect x="3" y="7" width="1" height="1" fill="#f8f000"/><rect x="4" y="7" width="1" height="1" fill="#000"/><rect x="5" y="7" width="1" height="1" fill="#f0f0f0"/><rect x="6" y="7" width="1" height="1" fill="#000"/><rect x="7" y="7" width="2" height="1" fill="#c8c8c8"/><rect x="9" y="7" width="1" height="1" fill="#000"/><rect x="10" y="7" width="3" height="1" fill="#0018ff"/><rect x="13" y="7" width="1" height="1" fill="#000"/><rect x="14" y="7" width="1" height="1" fill="#0018ff"/><rect x="15" y="7" width="1" height="1" fill="#000"/><rect x="0" y="8" width="1" height="1" fill="#000"/><rect x="1" y="8" width="1" height="1" fill="#00f0f0"/><rect x="2" y="8" width="1" height="1" fill="#000"/><rect x="3" y="8" width="1" height="1" fill="#f8f000"/><rect x="4" y="8" width="1" height="1" fill="#000"/><rect x="5" y="8" width="1" height="1" fill="#f0f0f0"/><rect x="6" y="8" width="1" height="1" fill="#000"/><rect x="7" y="8" width="1" height="1" fill="#c8c8c8"/><rect x="8" y="8" width="2" height="1" fill="#000"/><rect x="10" y="8" width="3" height="1" fill="#0018ff"/><rect x="13" y="8" width="1" height="1" fill="#000"/><rect x="14" y="8" width="1" height="1" fill="#0018ff"/><rect x="15" y="8" width="1" height="1" fill="#000"/><rect x="0" y="9" width="1" height="1" fill="#000"/><rect x="1" y="9" width="1" height="1" fill="#00f0f0"/><rect x="2" y="9" width="1" height="1" fill="#000"/><rect x="3" y="9" width="1" height="1" fill="#f8f000"/><rect x="4" y="9" width="1" height="1" fill="#000"/><rect x="5" y="9" width="1" height="1" fill="#f0f0f0"/><rect x="6" y="9" width="1" height="1" fill="#000"/><rect x="7" y="9" width="2" height="1" fill="#c8c8c8"/><rect x="9" y="9" width="1" height="1" fill="#000"/><rect x="10" y="9" width="3" height="1" fill="#0018ff"/><rect x="13" y="9" width="1" height="1" fill="#000"/><rect x="14" y="9" width="1" height="1" fill="#0018ff"/><rect x="15" y="9" width="1" height="1" fill="#000"/><rect x="0" y="10" width="1" height="1" fill="#000"/><rect x="1" y="10" width="1" height="1" fill="#00f0f0"/><rect x="2" y="10" width="1" height="1" fill="#000"/><rect x="3" y="10" width="1" height="1" fill="#f8f000"/><rect x="4" y="10" width="3" height="1" fill="#000"/><rect x="7" y="10" width="1" height="1" fill="#c8c8c8"/><rect x="8" y="10" width="2" height="1" fill="#000"/><rect x="10" y="10" width="3" height="1" fill="#0018ff"/><rect x="13" y="10" width="1" height="1" fill="#000"/><rect x="14" y="10" width="1" height="1" fill="#0018ff"/><rect x="15" y="10" width="1" height="1" fill="#000"/><rect x="0" y="11" width="1" height="1" fill="#000"/><rect x="1" y="11" width="1" height="1" fill="#00f0f0"/><rect x="2" y="11" width="1" height="1" fill="#000"/><rect x="3" y="11" width="1" height="1" fill="#f8f000"/><rect x="4" y="11" width="1" height="1" fill="#000"/><rect x="5" y="11" width="1" height="1" fill="#f0f0f0"/><rect x="6" y="11" width="1" height="1" fill="#000"/><rect x="7" y="11" width="2" height="1" fill="#c8c8c8"/><rect x="9" y="11" width="1" height="1" fill="#000"/><rect x="10" y="11" width="3" height="1" fill="#0018ff"/><rect x="13" y="11" width="1" height="1" fill="#000"/><rect x="14" y="11" width="1" height="1" fill="#0018ff"/><rect x="15" y="11" width="1" height="1" fill="#000"/><rect x="0" y="12" width="1" height="1" fill="#000"/><rect x="1" y="12" width="1" height="1" fill="#00f0f0"/><rect x="2" y="12" width="1" height="1" fill="#000"/><rect x="3" y="12" width="1" height="1" fill="#f8f000"/><rect x="4" y="12" width="1" height="1" fill="#000"/><rect x="5" y="12" width="1" height="1" fill="#f0f0f0"/><rect x="6" y="12" width="1" height="1" fill="#000"/><rect x="7" y="12" width="1" height="1" fill="#c8c8c8"/><rect x="8" y="12" width="2" height="1" fill="#000"/><rect x="10" y="12" width="3" height="1" fill="#0018ff"/><rect x="13" y="12" width="1" height="1" fill="#000"/><rect x="14" y="12" width="1" height="1" fill="#0018ff"/><rect x="15" y="12" width="1" height="1" fill="#000"/><rect x="0" y="13" width="1" height="1" fill="#000"/><rect x="1" y="13" width="1" height="1" fill="#00f0f0"/><rect x="2" y="13" width="1" height="1" fill="#000"/><rect x="3" y="13" width="1" height="1" fill="#f8f000"/><rect x="4" y="13" width="1" height="1" fill="#000"/><rect x="5" y="13" width="1" height="1" fill="#f0f0f0"/><rect x="6" y="13" width="1" height="1" fill="#000"/><rect x="7" y="13" width="2" height="1" fill="#c8c8c8"/><rect x="9" y="13" width="1" height="1" fill="#000"/><rect x="10" y="13" width="3" height="1" fill="#0018ff"/><rect x="13" y="13" width="1" height="1" fill="#000"/><rect x="14" y="13" width="1" height="1" fill="#0018ff"/><rect x="15" y="13" width="1" height="1" fill="#000"/><rect x="0" y="14" width="1" height="1" fill="#000"/><rect x="1" y="14" width="1" height="1" fill="#00f0f0"/><rect x="2" y="14" width="1" height="1" fill="#000"/><rect x="3" y="14" width="1" height="1" fill="#f8f000"/><rect x="4" y="14" width="1" height="1" fill="#000"/><rect x="5" y="14" width="1" height="1" fill="#f0f0f0"/><rect x="6" y="14" width="4" height="1" fill="#000"/><rect x="10" y="14" width="3" height="1" fill="#0018ff"/><rect x="13" y="14" width="3" height="1" fill="#000"/><rect x="0" y="15" width="7" height="1" fill="#000"/><rect x="10" y="15" width="4" height="1" fill="#000"/></svg>
<div class="t" style="left:703.70px;top:13px;font-size:15px;line-height:18px;letter-spacing:0.146px;color:#000;">Карточка жалобы</div>
<div style="left:1089px;top:12px;width:32px;height:18px;border:1px solid #5a6e87;border-radius:3px;background:linear-gradient(#c4d6ea 0%,#b3c9e2 45%,#98b4d4 50%,#a8c2e0 100%);"></div>
<div style="left:1099px;top:20px;width:11px;height:5px;background:#fff;border:1px solid #4d5d70;"></div>
<div style="left:1123px;top:12px;width:32px;height:18px;border:1px solid #5a6e87;border-radius:3px;background:linear-gradient(#c4d6ea 0%,#b3c9e2 45%,#98b4d4 50%,#a8c2e0 100%);"></div>
<div style="left:1133px;top:16px;width:11px;height:9px;background:#fff;border:1px solid #4d5d70;"></div>
<div style="left:1136px;top:19px;width:5px;height:3px;background:#4d5d70;"></div>
<div style="left:1157px;top:12px;width:32px;height:18px;border:1px solid #5c1f1f;border-radius:3px;background:linear-gradient(#e8a493 0%,#d8735d 45%,#c2421f 50%,#d0623e 100%);"></div>
<svg style="position:absolute;left:1166px;top:15px" width="14" height="11"><path d="M3 2 L11 9 M11 2 L3 9" stroke="#49312c" stroke-width="4" stroke-linecap="square"/><path d="M3 2 L11 9 M11 2 L3 9" stroke="#fff" stroke-width="2.4" stroke-linecap="square"/></svg>
<div style="left:424px;top:33px;width:767px;height:466px;background:#9eb6c4;"></div>
<div style="left:1192px;top:34px;width:4px;height:89px;background:linear-gradient(rgba(255,255,255,0),rgba(255,255,255,0.55));"></div>
<div class="t" style="left:548.70px;top:40px;font-size:11.4px;line-height:14px;letter-spacing:-0.114px;color:#000;font-weight:bold;">№ внутренний</div>
<div class="t" style="left:528.80px;top:63px;font-size:12px;line-height:14px;letter-spacing:0.116px;color:#000;">Дата регистрации</div>
<div class="t" style="left:558.70px;top:82px;font-size:12px;line-height:14px;letter-spacing:0.001px;color:#000;">Отправитель</div>
<div class="t" style="left:492.60px;top:102px;font-size:12px;line-height:14px;letter-spacing:0.184px;color:#000;">Содержание документа</div>
<div class="t" style="left:488.30px;top:126px;font-size:12px;line-height:14px;letter-spacing:0.243px;color:#000;">Подробное содержание</div>
<div class="t" style="left:641.00px;top:158px;font-size:12px;line-height:14px;letter-spacing:0.043px;color:#000;">Фото документа</div>
<div class="t" style="left:561.50px;top:222px;font-size:12px;line-height:14px;letter-spacing:0.029px;color:#000;">Получатель</div>
<div class="t" style="left:538.30px;top:241px;font-size:12px;line-height:14px;letter-spacing:0.087px;color:#000;">Дата получения</div>
<div class="t" style="left:517.50px;top:262px;font-size:12px;line-height:14px;letter-spacing:0.174px;color:#000;">Номер регистрации</div>
<div class="t" style="left:531.60px;top:281px;font-size:12px;line-height:14px;letter-spacing:0.155px;color:#000;">Способ отправки</div>
<div class="t" style="left:494.10px;top:301px;font-size:12px;line-height:14px;letter-spacing:0.184px;color:#000;">Исполнитель документа</div>
<div class="t" style="left:528.20px;top:321px;font-size:12px;line-height:14px;letter-spacing:0.347px;color:#000;">Срок исполнения</div>
<div class="t" style="left:555.60px;top:342px;font-size:12px;line-height:14px;letter-spacing:0.202px;color:#000;">Примечание</div>
<div class="t" style="left:486.60px;top:361px;font-size:12px;line-height:14px;letter-spacing:0.110px;color:#000;">Результат рассмотрения</div>
<div class="t" style="left:641.00px;top:378px;font-size:12px;line-height:14px;letter-spacing:0.043px;color:#000;">Фото документа</div>
<div class="t" style="left:498.30px;top:441px;font-size:12px;line-height:14px;letter-spacing:0.011px;color:#000;">Дата получения ответа</div>
<div class="t" style="left:460.80px;top:462px;font-size:12px;line-height:14px;letter-spacing:0.041px;color:#000;">Место нахождения документа</div>
<div class="t" style="left:745.60px;top:442px;font-size:12px;line-height:14px;letter-spacing:0.154px;color:#000;">№ регистрации</div>
<div class="t" style="left:778.10px;top:53px;font-size:12px;line-height:14px;letter-spacing:0.019px;color:#000;">Филиал</div>
<div style="left:640px;top:36px;width:100px;height:23px;border:1px solid #a3a6aa;"><div style="position:absolute;left:0;top:0;right:0;bottom:0;border:1px solid #c5d9ec;background:#ffff80"></div></div>
<div class="t" style="left:646.00px;top:41px;font-size:12px;line-height:14px;letter-spacing:0.000px;color:#0000ff;">1</div>
<div style="left:640px;top:59px;width:100px;height:20px;border:1px solid #a3a6aa;"><div style="position:absolute;left:0;top:0;right:0;bottom:0;border:1px solid #c5d9ec;background:#fff"></div></div>
<div style="left:640px;top:79px;width:300px;height:20px;border:1px solid #a3a6aa;"><div style="position:absolute;left:0;top:0;right:0;bottom:0;border:1px solid #c5d9ec;background:#fff"></div></div>
<div style="left:832px;top:48px;width:337px;height:24px;border:1px solid #a3a6aa;"><div style="position:absolute;left:0;top:0;right:0;bottom:0;border:1px solid #c5d9ec;background:#fff"></div></div>
<div style="left:640px;top:99px;width:529px;height:20px;border:1px solid #a3a6aa;"><div style="position:absolute;left:0;top:0;right:0;bottom:0;border:1px solid #c5d9ec;background:#fff"></div></div>
<div style="left:640px;top:119px;width:529px;height:40px;border:1px solid #a3a6aa;"><div style="position:absolute;left:0;top:0;right:0;bottom:0;border:1px solid #c5d9ec;background:#fff"></div></div>
<div style="left:640px;top:170px;width:108px;height:23px;border:1px solid #a3a6aa;"><div style="position:absolute;left:0;top:0;right:0;bottom:0;border:1px solid #c5d9ec;background:#fff"></div></div>
<div style="left:640px;top:219px;width:300px;height:20px;border:1px solid #a3a6aa;"><div style="position:absolute;left:0;top:0;right:0;bottom:0;border:1px solid #c5d9ec;background:#fff"></div></div>
<div style="left:640px;top:239px;width:100px;height:20px;border:1px solid #a3a6aa;"><div style="position:absolute;left:0;top:0;right:0;bottom:0;border:1px solid #c5d9ec;background:#fff"></div></div>
<div style="left:640px;top:259px;width:100px;height:20px;border:1px solid #a3a6aa;"><div style="position:absolute;left:0;top:0;right:0;bottom:0;border:1px solid #c5d9ec;background:#fff"></div></div>
<div style="left:640px;top:279px;width:300px;height:20px;border:1px solid #a3a6aa;"><div style="position:absolute;left:0;top:0;right:0;bottom:0;border:1px solid #c5d9ec;background:#fff"></div></div>
<div style="left:640px;top:299px;width:300px;height:20px;border:1px solid #a3a6aa;"><div style="position:absolute;left:0;top:0;right:0;bottom:0;border:1px solid #c5d9ec;background:#fff"></div></div>
<div style="left:640px;top:319px;width:100px;height:20px;border:1px solid #a3a6aa;"><div style="position:absolute;left:0;top:0;right:0;bottom:0;border:1px solid #c5d9ec;background:#fff"></div></div>
<div style="left:640px;top:339px;width:529px;height:20px;border:1px solid #a3a6aa;"><div style="position:absolute;left:0;top:0;right:0;bottom:0;border:1px solid #c5d9ec;background:#fff"></div></div>
<div style="left:640px;top:359px;width:529px;height:20px;border:1px solid #a3a6aa;"><div style="position:absolute;left:0;top:0;right:0;bottom:0;border:1px solid #c5d9ec;background:#fff"></div></div>
<div style="left:640px;top:390px;width:108px;height:23px;border:1px solid #a3a6aa;"><div style="position:absolute;left:0;top:0;right:0;bottom:0;border:1px solid #c5d9ec;background:#fff"></div></div>
<div style="left:640px;top:438px;width:100px;height:20px;border:1px solid #a3a6aa;"><div style="position:absolute;left:0;top:0;right:0;bottom:0;border:1px solid #c5d9ec;background:#fff"></div></div>
<div style="left:844px;top:437px;width:96px;height:20px;border:1px solid #a3a6aa;"><div style="position:absolute;left:0;top:0;right:0;bottom:0;border:1px solid #c5d9ec;background:#fff"></div></div>
<div style="left:640px;top:459px;width:300px;height:20px;border:1px solid #a3a6aa;"><div style="position:absolute;left:0;top:0;right:0;bottom:0;border:1px solid #c5d9ec;background:#fff"></div></div>
<div class="t" style="left:645.50px;top:64px;font-size:10.67px;line-height:13px;letter-spacing:-0.023px;color:#0000ff;">08.04.2014</div>
<div class="t" style="left:645.30px;top:84px;font-size:10.67px;line-height:13px;letter-spacing:-0.035px;color:#0000ff;">ФГУП "МВД"</div>
<div class="t" style="left:645.80px;top:104px;font-size:10.67px;line-height:13px;letter-spacing:0.275px;color:#0000ff;">Некачественное обслуживание в ресторане</div>
<div class="t" style="left:645.80px;top:125px;font-size:10.67px;line-height:13px;letter-spacing:0.193px;color:#000;">Главного инспектора 06 апреля 2014 года ФГУП "МВД" некачественно обслужили в ресторане "Три</div>
<div class="t" style="left:645.80px;top:139px;font-size:10.67px;line-height:13px;letter-spacing:0.140px;color:#000;">поросенка".</div>
<div class="t" style="left:645.90px;top:224px;font-size:10.67px;line-height:13px;letter-spacing:-0.092px;color:#0000ff;">ООО "Ручеек"</div>
<div class="t" style="left:645.90px;top:244px;font-size:10.67px;line-height:13px;letter-spacing:-0.067px;color:#0000ff;">08.04.2014</div>
<div class="t" style="left:645.90px;top:264px;font-size:10.67px;line-height:13px;letter-spacing:-1.126px;color:#0000ff;">34</div>
<div class="t" style="left:645.90px;top:284px;font-size:10.67px;line-height:13px;letter-spacing:0.253px;color:#0000ff;">Бумажный носитель</div>
<div class="t" style="left:645.90px;top:304px;font-size:10.67px;line-height:13px;letter-spacing:-0.020px;color:#0000ff;">Петров М.М.</div>
<div class="t" style="left:645.90px;top:324px;font-size:10.67px;line-height:13px;letter-spacing:-0.067px;color:#0000ff;">09.04.2014</div>
<div style="left:651px;top:451px;width:2px;height:1px;background:#6060ff;"></div>
<div style="left:661px;top:451px;width:2px;height:1px;background:#6060ff;"></div>
<div style="left:739px;top:328px;width:24px;height:1px;background:#505050;"></div>
<div class="t" style="left:763.70px;top:323px;font-size:11.3px;line-height:13px;letter-spacing:0.014px;color:#ff0000;font-weight:bold;">(На контроле)</div>
<div style="left:641px;top:195px;width:106px;height:21px;border:1px solid #a9a9a9;background:linear-gradient(#f4f4f4,#dedede);"></div>
<div style="left:641px;top:416px;width:106px;height:20px;border:1px solid #a9a9a9;background:linear-gradient(#f4f4f4,#dedede);"></div>
<div style="left:1038px;top:203px;width:129px;height:15px;border:1px solid #a9a9a9;background:linear-gradient(#f4f4f4,#dedede);"></div>
<div class="t" style="left:668.40px;top:200px;font-size:11px;line-height:13px;letter-spacing:0.055px;color:#000;">Просмотр</div>
<div class="t" style="left:668.40px;top:420px;font-size:11px;line-height:13px;letter-spacing:0.055px;color:#000;">Просмотр</div>
<div class="t" style="left:1060.80px;top:204px;font-size:12px;line-height:14px;letter-spacing:0.235px;color:#000;">Пользователи</div>
<div style="left:1038px;top:245px;width:33px;height:21px;border:1px solid #b9c3cb;background:linear-gradient(#f2f2f2,#e2e2e2);"></div>
<svg style="position:absolute;left:1046px;top:247px" width="18" height="15" shape-rendering="crispEdges"><rect x="6" y="0" width="8" height="1" fill="#000"/><rect x="5" y="1" width="1" height="1" fill="#000"/><rect x="6" y="1" width="7" height="1" fill="#fff"/><rect x="13" y="1" width="1" height="1" fill="#000"/><rect x="5" y="2" width="1" height="1" fill="#000"/><rect x="6" y="2" width="1" height="1" fill="#fff"/><rect x="7" y="2" width="4" height="1" fill="#000"/><rect x="11" y="2" width="2" height="1" fill="#fff"/><rect x="13" y="2" width="1" height="1" fill="#000"/><rect x="4" y="3" width="1" height="1" fill="#000"/><rect x="5" y="3" width="6" height="1" fill="#fff"/><rect x="11" y="3" width="2" height="1" fill="#000"/><rect x="14" y="3" width="1" height="1" fill="#000"/><rect x="4" y="4" width="1" height="1" fill="#000"/><rect x="5" y="4" width="1" height="1" fill="#fff"/><rect x="6" y="4" width="4" height="1" fill="#000"/><rect x="10" y="4" width="1" height="1" fill="#fff"/><rect x="11" y="4" width="2" height="1" fill="#000"/><rect x="13" y="4" width="1" height="1" fill="#fff"/><rect x="14" y="4" width="2" height="1" fill="#000"/><rect x="3" y="5" width="10" height="1" fill="#000"/><rect x="13" y="5" width="1" height="1" fill="#fff"/><rect x="14" y="5" width="1" height="1" fill="#000"/><rect x="15" y="5" width="1" height="1" fill="#fff"/><rect x="16" y="5" width="1" height="1" fill="#000"/><rect x="2" y="6" width="12" height="1" fill="#000"/><rect x="14" y="6" width="1" height="1" fill="#fff"/><rect x="15" y="6" width="2" height="1" fill="#000"/><rect x="1" y="7" width="2" height="1" fill="#000"/><rect x="3" y="7" width="9" height="1" fill="#a8a8a8"/><rect x="12" y="7" width="2" height="1" fill="#000"/><rect x="14" y="7" width="1" height="1" fill="#fff"/><rect x="15" y="7" width="2" height="1" fill="#000"/><rect x="0" y="8" width="15" height="1" fill="#000"/><rect x="15" y="8" width="1" height="1" fill="#fff"/><rect x="16" y="8" width="1" height="1" fill="#000"/><rect x="0" y="9" width="1" height="1" fill="#000"/><rect x="1" y="9" width="12" height="1" fill="#a8a8a8"/><rect x="13" y="9" width="1" height="1" fill="#000"/><rect x="14" y="9" width="1" height="1" fill="#fff"/><rect x="15" y="9" width="1" height="1" fill="#000"/><rect x="0" y="10" width="1" height="1" fill="#000"/><rect x="1" y="10" width="7" height="1" fill="#a8a8a8"/><rect x="8" y="10" width="4" height="1" fill="#000"/><rect x="12" y="10" width="1" height="1" fill="#a8a8a8"/><rect x="13" y="10" width="3" height="1" fill="#000"/><rect x="0" y="11" width="1" height="1" fill="#000"/><rect x="1" y="11" width="7" height="1" fill="#a8a8a8"/><rect x="8" y="11" width="4" height="1" fill="#fff"/><rect x="12" y="11" width="1" height="1" fill="#a8a8a8"/><rect x="13" y="11" width="1" height="1" fill="#000"/><rect x="14" y="11" width="1" height="1" fill="#fff"/><rect x="15" y="11" width="1" height="1" fill="#000"/><rect x="0" y="12" width="14" height="1" fill="#000"/><rect x="14" y="12" width="1" height="1" fill="#fff"/><rect x="15" y="12" width="1" height="1" fill="#000"/><rect x="1" y="13" width="1" height="1" fill="#000"/><rect x="2" y="13" width="10" height="1" fill="#a8a8a8"/><rect x="12" y="13" width="1" height="1" fill="#000"/><rect x="13" y="13" width="1" height="1" fill="#fff"/><rect x="14" y="13" width="1" height="1" fill="#000"/><rect x="2" y="14" width="12" height="1" fill="#000"/></svg>
<div style="left:1071px;top:255px;width:13px;height:1px;background:#505050;"></div>
<svg style="position:absolute;left:1084px;top:249px" width="13" height="13"><rect x="0.5" y="0.5" width="12" height="12" fill="#fff" stroke="#555"/><path d="M3 6 L5.5 8.5 L10 3.8" stroke="#000" stroke-width="2.2" fill="none"/></svg>
<div class="t" style="left:1100.30px;top:249px;font-size:12px;line-height:14px;letter-spacing:0.182px;color:#000;">Просмотр</div>
<svg style="position:absolute;left:1084px;top:265px" width="13" height="13"><rect x="0.5" y="0.5" width="12" height="12" fill="#fff" stroke="#555"/></svg>
<div class="t" style="left:1100.30px;top:265px;font-size:12px;line-height:14px;letter-spacing:-0.003px;color:#000;">В Word</div>
<div style="left:1036px;top:285px;width:133px;height:37px;border-top:1px solid #fff;border-left:1px solid #fff;border-right:1px solid #555;border-bottom:1px solid #555;background:#9eb6c4;"></div>
<div style="left:1045px;top:297px;width:13px;height:13px;background:#e4e4e4;border:1px solid #c8c8c8;"></div>
<div class="t" style="left:1062.20px;top:297px;font-size:12px;line-height:14px;letter-spacing:-0.194px;color:#400040;font-weight:bold;text-shadow:1px 1px 0 #fff;">Жалоба закрыта</div>
<div style="left:1061px;top:430px;width:107px;height:47px;border:1px solid #3c9bef;background:linear-gradient(#f4f4f4,#e6e6e6);"></div>
<div style="left:1064px;top:433px;width:101px;height:41px;border:1px solid #ffff00;"></div>
<div style="left:1064px;top:433px;width:101px;height:41px;border:1px dotted #000;"></div>
<svg style="position:absolute;left:1106px;top:439px" width="16" height="15" shape-rendering="crispEdges"><rect x="0" y="0" width="1" height="1" fill="#c8c8c8"/><rect x="1" y="0" width="8" height="1" fill="#000"/><rect x="9" y="0" width="7" height="1" fill="#c8c8c8"/><rect x="0" y="1" width="1" height="1" fill="#c8c8c8"/><rect x="1" y="1" width="1" height="1" fill="#000"/><rect x="2" y="1" width="1" height="1" fill="#a0a000"/><rect x="3" y="1" width="5" height="1" fill="#fff"/><rect x="8" y="1" width="1" height="1" fill="#000"/><rect x="9" y="1" width="7" height="1" fill="#c8c8c8"/><rect x="0" y="2" width="1" height="1" fill="#c8c8c8"/><rect x="1" y="2" width="1" height="1" fill="#000"/><rect x="2" y="2" width="2" height="1" fill="#a0a000"/><rect x="4" y="2" width="4" height="1" fill="#fff"/><rect x="8" y="2" width="1" height="1" fill="#000"/><rect x="9" y="2" width="4" height="1" fill="#c8c8c8"/><rect x="13" y="2" width="1" height="1" fill="#000090"/><rect x="14" y="2" width="2" height="1" fill="#c8c8c8"/><rect x="0" y="3" width="1" height="1" fill="#c8c8c8"/><rect x="1" y="3" width="1" height="1" fill="#000"/><rect x="2" y="3" width="3" height="1" fill="#a0a000"/><rect x="5" y="3" width="3" height="1" fill="#fff"/><rect x="8" y="3" width="1" height="1" fill="#000"/><rect x="9" y="3" width="3" height="1" fill="#c8c8c8"/><rect x="12" y="3" width="2" height="1" fill="#000090"/><rect x="14" y="3" width="2" height="1" fill="#c8c8c8"/><rect x="0" y="4" width="1" height="1" fill="#c8c8c8"/><rect x="1" y="4" width="1" height="1" fill="#000"/><rect x="2" y="4" width="3" height="1" fill="#a0a000"/><rect x="5" y="4" width="1" height="1" fill="#000"/><rect x="6" y="4" width="2" height="1" fill="#fff"/><rect x="8" y="4" width="1" height="1" fill="#000"/><rect x="9" y="4" width="2" height="1" fill="#c8c8c8"/><rect x="11" y="4" width="5" height="1" fill="#000090"/><rect x="0" y="5" width="1" height="1" fill="#c8c8c8"/><rect x="1" y="5" width="1" height="1" fill="#000"/><rect x="2" y="5" width="3" height="1" fill="#a0a000"/><rect x="5" y="5" width="1" height="1" fill="#000"/><rect x="6" y="5" width="2" height="1" fill="#fff"/><rect x="8" y="5" width="1" height="1" fill="#000"/><rect x="9" y="5" width="1" height="1" fill="#c8c8c8"/><rect x="10" y="5" width="6" height="1" fill="#000090"/><rect x="0" y="6" width="1" height="1" fill="#c8c8c8"/><rect x="1" y="6" width="1" height="1" fill="#000"/><rect x="2" y="6" width="3" height="1" fill="#a0a000"/><rect x="5" y="6" width="1" height="1" fill="#000"/><rect x="6" y="6" width="2" height="1" fill="#fff"/><rect x="8" y="6" width="1" height="1" fill="#000"/><rect x="9" y="6" width="2" height="1" fill="#c8c8c8"/><rect x="11" y="6" width="5" height="1" fill="#000090"/><rect x="0" y="7" width="1" height="1" fill="#c8c8c8"/><rect x="1" y="7" width="1" height="1" fill="#000"/><rect x="2" y="7" width="3" height="1" fill="#a0a000"/><rect x="5" y="7" width="3" height="1" fill="#fff"/><rect x="8" y="7" width="1" height="1" fill="#000"/><rect x="9" y="7" width="3" height="1" fill="#c8c8c8"/><rect x="12" y="7" width="2" height="1" fill="#000090"/><rect x="14" y="7" width="2" height="1" fill="#c8c8c8"/><rect x="0" y="8" width="1" height="1" fill="#c8c8c8"/><rect x="1" y="8" width="1" height="1" fill="#000"/><rect x="2" y="8" width="3" height="1" fill="#a0a000"/><rect x="5" y="8" width="3" height="1" fill="#fff"/><rect x="8" y="8" width="1" height="1" fill="#000"/><rect x="9" y="8" width="4" height="1" fill="#c8c8c8"/><rect x="13" y="8" width="1" height="1" fill="#000090"/><rect x="14" y="8" width="2" height="1" fill="#c8c8c8"/><rect x="0" y="9" width="1" height="1" fill="#c8c8c8"/><rect x="1" y="9" width="1" height="1" fill="#000"/><rect x="2" y="9" width="3" height="1" fill="#a0a000"/><rect x="5" y="9" width="3" height="1" fill="#fff"/><rect x="8" y="9" width="1" height="1" fill="#000"/><rect x="9" y="9" width="7" height="1" fill="#c8c8c8"/><rect x="0" y="10" width="2" height="1" fill="#000"/><rect x="2" y="10" width="3" height="1" fill="#a0a000"/><rect x="5" y="10" width="9" height="1" fill="#000"/><rect x="14" y="10" width="2" height="1" fill="#c8c8c8"/><rect x="0" y="11" width="2" height="1" fill="#c8c8c8"/><rect x="2" y="11" width="1" height="1" fill="#000"/><rect x="3" y="11" width="2" height="1" fill="#a0a000"/><rect x="5" y="11" width="1" height="1" fill="#000"/><rect x="6" y="11" width="10" height="1" fill="#c8c8c8"/><rect x="0" y="12" width="3" height="1" fill="#c8c8c8"/><rect x="3" y="12" width="1" height="1" fill="#000"/><rect x="4" y="12" width="1" height="1" fill="#a0a000"/><rect x="5" y="12" width="1" height="1" fill="#000"/><rect x="6" y="12" width="10" height="1" fill="#c8c8c8"/><rect x="0" y="13" width="4" height="1" fill="#c8c8c8"/><rect x="4" y="13" width="2" height="1" fill="#000"/><rect x="6" y="13" width="10" height="1" fill="#c8c8c8"/><rect x="0" y="14" width="5" height="1" fill="#c8c8c8"/><rect x="5" y="14" width="1" height="1" fill="#000"/><rect x="6" y="14" width="10" height="1" fill="#c8c8c8"/></svg>
<div class="t" style="left:1094.30px;top:460px;font-size:12px;line-height:14px;letter-spacing:-0.240px;color:#0000ff;font-weight:bold;text-underline-offset:1px;text-decoration-skip-ink:none;"><u>Выход</u></div>
</body></html>
